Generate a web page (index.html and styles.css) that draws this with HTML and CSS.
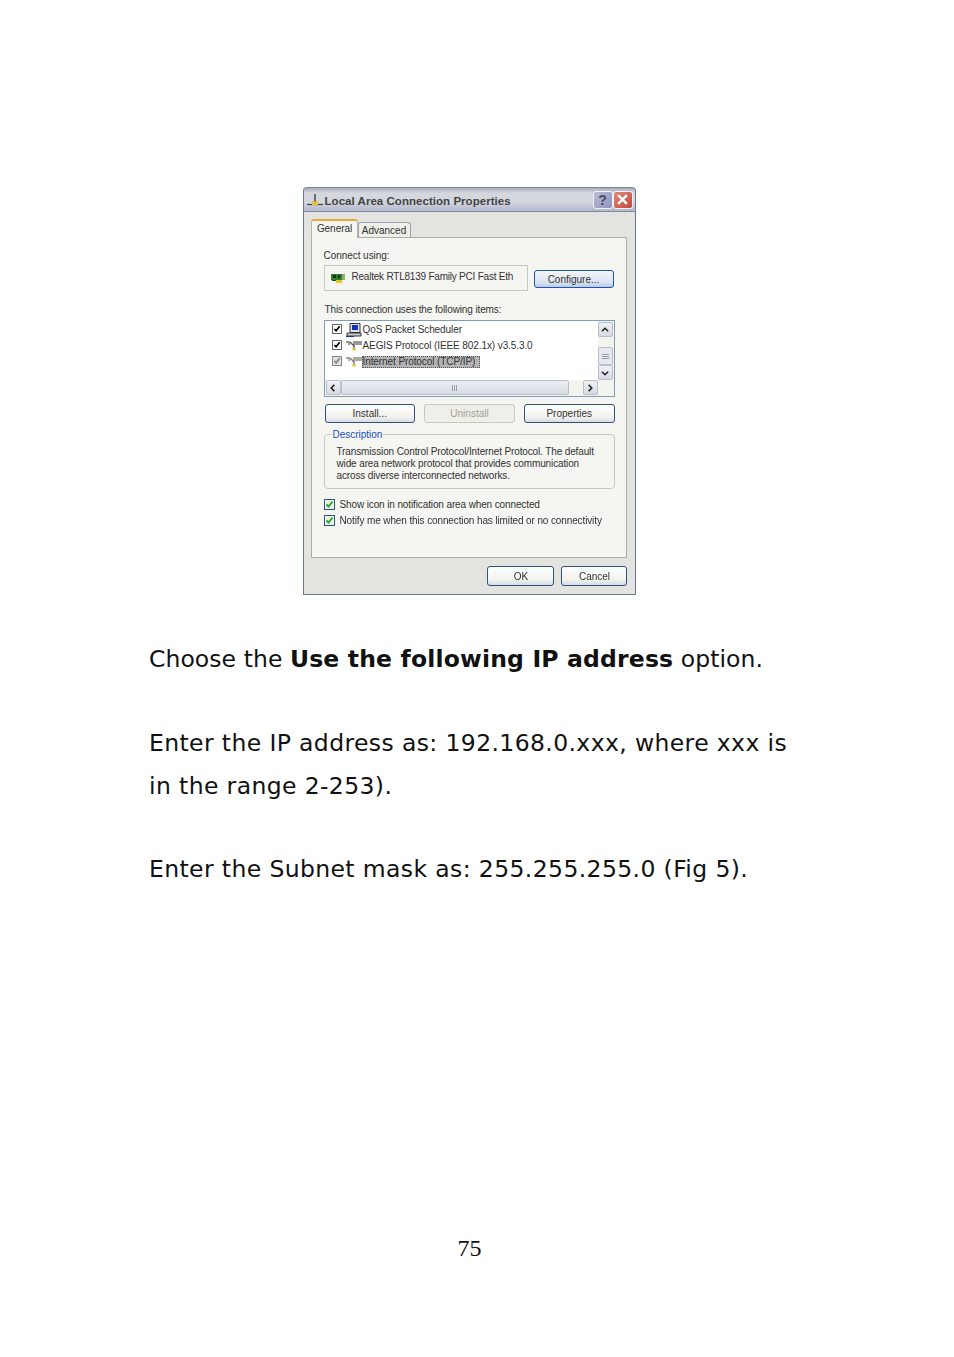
FILE: index.html
```html
<!DOCTYPE html>
<html lang="en">
<head>
<meta charset="utf-8">
<title>Manual page 75</title>
<link rel="stylesheet" href="styles.css">
</head>
<body>
<main class="page">
  <section class="dialog">
    <header class="titlebar">
      <svg class="ticon" viewBox="0 0 16 14"><path d="M8 1v8" stroke="#333" stroke-width="1.300" fill="none"/><path d="M0 11.500h16" stroke="#444" stroke-width="1.200"/><path d="M5 8.500h6v3.500H5z" fill="#e8c030"/></svg>
      <span class="ttext">Local Area Connection Properties</span>
      <span class="tbtn help">?</span>
      <span class="tbtn close"><svg viewBox="0 0 10 10"><path d="M1 1l8 8M9 1l-8 8" stroke="#fff" stroke-width="2.200"/></svg></span>
    </header>
    <nav class="tabs">
      <span class="tab active">General</span>
      <span class="tab">Advanced</span>
    </nav>
    <div class="panel">
      <div class="label">Connect using:</div>
      <div class="connect">
        <div class="adapter">
          <svg class="nic" viewBox="0 0 14 11"><path d="M0 1h11v6H0z" fill="#2f7d33"/><path d="M2 2h3v3H2zM7 2h2v3H7z" fill="#12301a"/><path d="M11 1h3v6h-3z" fill="#8fae70"/><path d="M5 7h6v3H5z" fill="#e6c81e"/><path d="M1 7h4v1H1z" fill="#1c5a24"/></svg>
          <span class="adname">Realtek RTL8139 Family PCI Fast Eth</span>
        </div>
        <span class="btn configure">Configure...</span>
      </div>
      <div class="label items">This connection uses the following items:</div>
      <div class="list">
        <div class="rows">
          <div class="row">
            <span class="chk"><svg viewBox="0 0 9 9"><path d="M1.500 4.500l2 2 4-5" stroke="#000" stroke-width="1.900" fill="none"/></svg></span>
            <svg class="ric" viewBox="0 0 16 14"><path d="M4 .5h10v9H4z" fill="#dfe3ea" stroke="#333"/><path d="M6 2h6v5H6z" fill="#1b2fb5"/><path d="M1 10h14v3H1z" fill="#c8ccd6" stroke="#333"/><path d="M0 13h8v1H0z" fill="#1b2fb5"/></svg>
            <span class="rtext">QoS Packet Scheduler</span>
          </div>
          <div class="row">
            <span class="chk"><svg viewBox="0 0 9 9"><path d="M1.500 4.500l2 2 4-5" stroke="#000" stroke-width="1.900" fill="none"/></svg></span>
            <svg class="ric" viewBox="0 0 16 14"><path d="M0 3h4M7 3h9M2 5h2M7 5h9" stroke="#333"/><path d="M4 3l4 4" stroke="#555" stroke-width="1.200"/><path d="M8 6v3" stroke="#444" stroke-width="1.200"/><path d="M6.500 9h3v2.500h-3z" fill="#d8c030"/></svg>
            <span class="rtext">AEGIS Protocol (IEEE 802.1x) v3.5.3.0</span>
          </div>
          <div class="row">
            <span class="chk off"><svg viewBox="0 0 9 9"><path d="M1.500 4.500l2 2 4-5" stroke="#808080" stroke-width="1.900" fill="none"/></svg></span>
            <svg class="ric" viewBox="0 0 16 14"><path d="M0 3h4M7 3h9M2 5h2M7 5h9" stroke="#555"/><path d="M4 3l4 4" stroke="#777" stroke-width="1.200"/><path d="M8 6v3" stroke="#666" stroke-width="1.200"/><path d="M6.500 9h3v2.500h-3z" fill="#d8c030"/></svg>
            <span class="rtext sel">Internet Protocol (TCP/IP)</span>
          </div>
        </div>
        <div class="vscroll">
          <span class="sbtn"><svg viewBox="0 0 9 7"><path d="M1 5l3.500-3.500L8 5" stroke="#222" stroke-width="1.700" fill="none"/></svg></span>
          <span class="vthumb"><i></i><i></i><i></i></span>
          <span class="sbtn"><svg viewBox="0 0 9 7"><path d="M1 2l3.500 3.500L8 2" stroke="#222" stroke-width="1.700" fill="none"/></svg></span>
        </div>
        <div class="hscroll">
          <span class="sbtn"><svg viewBox="0 0 7 9"><path d="M5 1L1.500 4.500 5 8" stroke="#222" stroke-width="1.700" fill="none"/></svg></span>
          <span class="hthumb"><i></i><i></i><i></i></span>
          <span class="sbtn"><svg viewBox="0 0 7 9"><path d="M2 1l3.500 3.500L2 8" stroke="#222" stroke-width="1.700" fill="none"/></svg></span>
        </div>
      </div>
      <div class="actions">
        <span class="btn">Install...</span>
        <span class="btn disabled">Uninstall</span>
        <span class="btn">Properties</span>
      </div>
      <div class="group">
        <span class="legend">Description</span>
        <p>Transmission Control Protocol/Internet Protocol. The default<br>wide area network protocol that provides communication<br>across diverse interconnected networks.</p>
      </div>
      <div class="checks">
        <div class="check"><span class="xp"><svg viewBox="0 0 9 9"><path d="M1.500 4.500l2 2 4-5" stroke="#2aa52a" stroke-width="1.900" fill="none"/></svg></span>Show icon in notification area when connected</div>
        <div class="check"><span class="xp"><svg viewBox="0 0 9 9"><path d="M1.500 4.500l2 2 4-5" stroke="#2aa52a" stroke-width="1.900" fill="none"/></svg></span>Notify me when this connection has limited or no connectivity</div>
      </div>
    </div>
    <footer class="footer">
      <span class="btn ok">OK</span>
      <span class="btn cancel">Cancel</span>
    </footer>
  </section>

  <section class="copy">
    <p class="first">Choose the <strong>Use the following IP address</strong> option.</p>
    <p>Enter the IP address as: 192.168.0.xxx, where xxx is<br>in the range 2-253).</p>
    <p>Enter the Subnet mask as: 255.255.255.0 (Fig 5).</p>
  </section>

  <div class="pagenum">75</div>
</main>
</body>
</html>
```
FILE: styles.css
```css
* { box-sizing: border-box; }
html, body { margin: 0; background: #fff; }
.page { width: 954px; height: 1357px; padding-top: 187px; overflow: hidden; display: flex; flex-direction: column; }

.dialog {
  width: 333px; height: 408px; margin-left: 302.500px; flex: none;
  background: #e3e3df; border: 1px solid #6d7796; border-top: 0; border-radius: 4px 4px 0 0;
  font: 10px/12px "Liberation Sans", sans-serif; color: #333;
  display: flex; flex-direction: column;
  filter: blur(.3px);
}
.titlebar {
  height: 25px; flex: none; display: flex; align-items: center; padding: 0 2px 0 3px;
  background: linear-gradient(#a9acbb 0, #d5d7de 22%, #d3d6de 60%, #b3b8cc 100%);
  border-radius: 4px 4px 0 0; border-top: 1px solid #7f8498; border-bottom: 1px solid #7f88a5;
}
.ticon { width: 16px; height: 14px; flex: none; }
.ttext { flex: 1; margin-left: 2px; padding-top: 2px; font-size: 11.500px; font-weight: bold; color: #444; letter-spacing: .04px; }
.tbtn { width: 20px; height: 18px; border-radius: 3px; border: 1px solid #f1f1f4; display: flex; align-items: center; justify-content: center; flex: none; }
.help { background: linear-gradient(135deg, #b9bdd6, #8f94bb); color: #4a4a66; font-size: 14px; font-weight: bold; }
.close { background: linear-gradient(135deg, #e08878, #c4493c); }
.close svg { width: 11px; height: 11px; }

.tabs { height: 25px; flex: none; display: flex; align-items: flex-end; padding-left: 7px; }
.tab {
  height: 15px; width: 53px; background: #eeeeea;
  border: 1px solid #9aa5b0; border-bottom: 0; border-radius: 3px 3px 0 0; text-align: center; line-height: 15px; color: #333;
}
.tab.active {
  width: 47px; height: 19px; padding-left: 1px; background: #f5f5f1; border-color: #b5b5aa; border-top: 2px solid #e8a840; line-height: 15px; letter-spacing: -.05px; position: relative; top: 1px;
}

.panel {
  width: 316px; height: 321px; margin-left: 7px; flex: none;
  background: #f5f5f1; border: 1px solid #aeaea4; padding: 0 11px 0 12px;
}
.label { height: 14px; margin-top: 11px; line-height: 14px; letter-spacing: -.05px; }
.label.items { margin-top: 12px; padding-left: 1px; letter-spacing: -.12px; }
.connect { display: flex; height: 26px; margin-top: 2px; width: 291px; }
.adapter { width: 204px; height: 26px; border: 1px solid #c8c8c0; display: flex; align-items: center; padding-left: 6px; gap: 7px; }
.adname { white-space: nowrap; letter-spacing: -.22px; margin-top: -2px; }
.nic { width: 14px; height: 11px; flex: none; }
.btn {
  display: flex; align-items: center; justify-content: center; flex: none;
  height: 19px; width: 90.500px; border: 1px solid #31507f; border-radius: 3px;
  background: linear-gradient(#fff, #f2f2ee 70%, #d8dbe6); color: #333;
}
.btn.configure { width: 80px; height: 18px; margin: 5px 0 0 6px; padding-top: 2px; background: linear-gradient(#f4f6fb, #dce4f2 70%, #b9c9e6); border-color: #1f55a8; }
.btn.disabled { border-color: #c9c9bf; background: #efefe9; color: #a2a294; }

.list {
  height: 77px; margin-top: 3px; border: 1px solid #7f9db9; background: #fff;
  display: grid; grid-template-columns: 1fr 16px; grid-template-rows: 1fr 16px;
}
.rows { padding: 1px 0 0 7px; }
.row { height: 16px; display: flex; align-items: center; }
.chk { width: 10px; height: 10px; margin-bottom: 2px; border: 1px solid #666; background: #fff; flex: none; display: flex; }
.chk.off { background: #e0e0dc; border-color: #888; }
.chk svg, .xp svg { width: 100%; height: 100%; }
.ric { width: 16px; height: 14px; margin-left: 4px; flex: none; }
.rtext { padding: 0 1px; letter-spacing: -.09px; }
.rtext.sel { background: #b4b4b4; outline: 1px dotted #555; outline-offset: -1px; padding: 0 5px 0 1px; }

.vscroll { display: flex; flex-direction: column; padding: 1px 0 0; background: #f3f3ef; }
.sbtn { width: 15px; height: 15px; border: 1px solid #b8bfcc; border-radius: 2px; background: linear-gradient(#f0f1f4, #d6d9e2); display: flex; align-items: center; justify-content: center; flex: none; }
.sbtn svg { width: 8px; height: 8px; }
.vthumb { height: 18px; width: 15px; margin-top: auto; border: 1px solid #b8bfcc; border-radius: 2px; background: #e6e8ee; display: flex; flex-direction: column; align-items: center; justify-content: center; gap: 1px; }
.vthumb i { width: 7px; height: 1px; background: #9aa0ae; }
.hscroll { grid-column: 1 / 3; display: flex; padding-left: 1px; background: #f3f3ef; padding-right: 16px; }
.hthumb { width: 228px; height: 15px; border: 1px solid #b8bfcc; border-radius: 2px; background: linear-gradient(#eceef2, #d8dbe3); display: flex; align-items: center; justify-content: center; gap: 1px; margin-right: 14px; }
.hthumb i { width: 1px; height: 6px; background: #9aa0ae; }

.actions { display: flex; justify-content: space-between; margin-top: 7px; padding-left: 1px; }
.group { height: 55px; margin-top: 11px; border: 1px solid #c8c8c0; border-radius: 4px; position: relative; }
.group p { margin: 11px 0 0 12px; letter-spacing: -.13px; }
.legend { position: absolute; left: 7px; top: -7px; padding: 0 1px; background: #f5f5f1; color: #2050c0; line-height: 13px; letter-spacing: -.03px; }
.checks { margin-top: 8px; }
.check { height: 16px; display: flex; align-items: center; gap: 5px; letter-spacing: -.12px; }
.xp { width: 11px; height: 11px; margin-bottom: 1px; border: 1px solid #2c5a88; background: #f2f2ec; flex: none; display: flex; }
.footer { display: flex; justify-content: flex-end; gap: 7px; margin-top: 8px; padding-right: 8px; }
.btn.ok { width: 67px; height: 20px; padding: 2px 0 0 2px; }
.btn.cancel { width: 66px; height: 20px; padding: 2px 0 0 2px; }

.copy { margin: 43px 0 0 149px; font: 23.500px/43px "DejaVu Sans", Verdana, sans-serif; color: #111; letter-spacing: .38px; }
.copy p { margin: 0 0 40px; white-space: nowrap; }
.copy p.first { letter-spacing: .06px; margin-bottom: 41px; }
.copy strong { font-weight: bold; letter-spacing: .17px; }

.pagenum { margin-top: auto; margin-bottom: 96px; padding-right: 15px; text-align: center; font: 24px/26px "Liberation Serif", serif; color: #111; }
```
